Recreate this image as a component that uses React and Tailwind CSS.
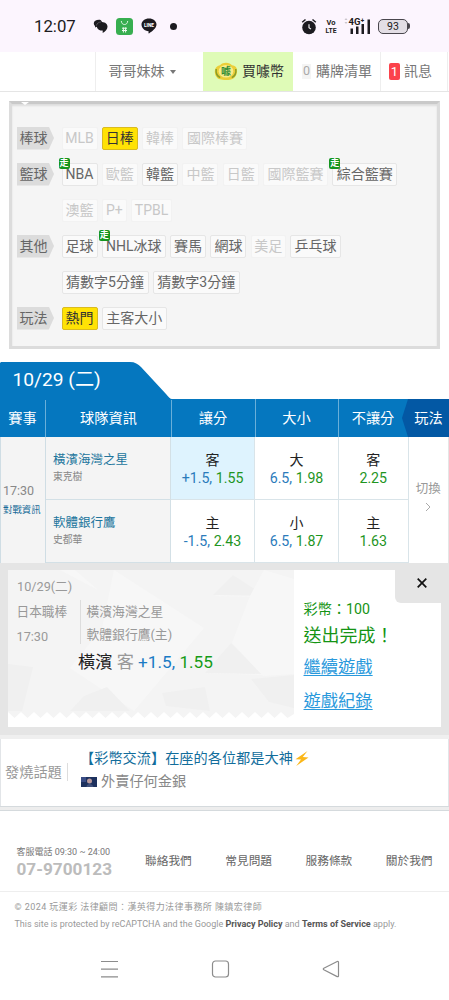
import React from "react";

const sports = [
  {
    label: "棒球",
    items: [
      { name: "MLB", off: true, w: "w-9" },
      { name: "日棒", active: true, w: "w-9" },
      { name: "韓棒", off: true, w: "w-9" },
      { name: "國際棒賽", off: true, w: "w-[65px]" },
    ],
  },
  {
    label: "籃球",
    items: [
      { name: "NBA", live: true, w: "w-9" },
      { name: "歐籃", off: true, w: "w-9" },
      { name: "韓籃", w: "w-9" },
      { name: "中籃", off: true, w: "w-9" },
      { name: "日籃", off: true, w: "w-9" },
      { name: "國際籃賽", off: true, w: "w-[65px]" },
      { name: "綜合籃賽", live: true, w: "w-[65px]" },
    ],
  },
  {
    items: [
      { name: "澳籃", off: true, w: "w-9" },
      { name: "P+", off: true, w: "w-[25px]" },
      { name: "TPBL", off: true, w: "w-[41px]" },
    ],
  },
  {
    label: "其他",
    items: [
      { name: "足球", w: "w-9" },
      { name: "NHL冰球", live: true, w: "w-[64px]" },
      { name: "賽馬", w: "w-9" },
      { name: "網球", w: "w-9" },
      { name: "美足", off: true, w: "w-[35px]" },
      { name: "乒乓球", w: "w-[51px]" },
    ],
  },
  {
    items: [
      { name: "猜數字5分鐘", w: "w-[87px]" },
      { name: "猜數字3分鐘", w: "w-[87px]" },
    ],
  },
  {
    label: "玩法",
    items: [
      { name: "熱門", active: true, w: "w-9" },
      { name: "主客大小", w: "w-[65px]" },
    ],
  },
];

const games = [
  {
    team: "橫濱海灣之星",
    pitcher: "東克樹",
    odds: [
      { side: "客", point: "+1.5,", rate: "1.55", picked: true },
      { side: "大", point: "6.5,", rate: "1.98" },
      { side: "客", rate: "2.25" },
    ],
  },
  {
    team: "軟體銀行鷹",
    pitcher: "史都華",
    odds: [
      { side: "主", point: "-1.5,", rate: "2.43" },
      { side: "小", point: "6.5,", rate: "1.87" },
      { side: "主", rate: "1.63" },
    ],
  },
];

const footerLinks = ["聯絡我們", "常見問題", "服務條款", "關於我們"];

function StatusBar() {
  return (
    <div className="flex h-[52px] items-center bg-[#fcf5fe] pl-[34px] text-[#1c1b20]">
      <span className="w-[59px] text-[16.800px] leading-none">12:07</span>
      <svg className="h-4 w-4" viewBox="0 0 16 16" fill="#1c1b20">
        <path d="M6 1.800C3 1.800.8 3.200.8 5.200c0 1.200.5 2 1.300 2.700L2 9.500l1.700-.8c.8 2.700 2.800 3.800 6 3.900v2.500c2.700-1.700 4.800-3.700 4.800-6.300 0-3-2.200-4.700-5.500-4.900C8.400 2.400 7.400 1.800 6 1.800Z" />
        <path d="M3.500 7.500c.3-2.300 2.500-3.400 4.500-3.500" fill="none" stroke="#8d8890" strokeWidth=".5" />
      </svg>
      <svg className="ml-[7px] h-[17px] w-[17px]" viewBox="0 0 17 17">
        <rect width="17" height="17" rx="3.500" fill="#37ae50" />
        <path d="M5.300 3c.2 2.400 1.500 3.500 3.200 3.500S11.500 5.400 11.700 3" fill="none" stroke="#dff5e2" strokeWidth="1" />
        <path d="M6 10.200h5M6 12.500h5M7.400 9.500v5M9.600 9.500v5" stroke="#eefbef" strokeWidth="1" />
      </svg>
      <svg className="ml-2 h-4 w-4" viewBox="0 0 16 16">
        <path d="M8 .5c4.300 0 7.500 2.700 7.500 6.100C15.500 10.300 11 13.500 8 15.500c-.5.200-.6-.6-.4-2.200C3.500 13 .5 10.200.5 6.600.5 3.200 3.700.5 8 .5Z" fill="#1c1b20" />
        <text x="8" y="8.700" textAnchor="middle" fontSize="4.800" fontWeight="800" fill="#fff">LINE</text>
      </svg>
      <span className="ml-[13px] h-[7px] w-[7px] rounded-full bg-[#1c1b20]" />
      <svg className="ml-[124px] h-[17px] w-4" viewBox="0 0 16 17" fill="none" stroke="#1c1b20">
        <circle cx="8" cy="9.500" r="6.800" fill="#1c1b20" stroke="none" />
        <path d="M1.200 4.300 4.500 1.500M14.800 4.300 11.500 1.500" strokeWidth="1.500" />
        <path d="M8 6.300v3.500l2 1.300" stroke="#fff" strokeWidth="1.100" />
      </svg>
      <svg className="ml-[8px] h-[20px] w-[12px]" viewBox="0 0 12 20" fill="#1c1b20" fontWeight="700">
        <text x="6" y="9" textAnchor="middle" fontSize="7.500">Vo</text>
        <text x="6" y="17.300" textAnchor="middle" fontSize="7" textLength="11" lengthAdjust="spacingAndGlyphs">LTE</text>
      </svg>
      <svg className="ml-[6px] h-[20px] w-[29px]" viewBox="0 0 29 20" fill="#1c1b20">
        <path d="m1.500 4 1.500-2 1.500 2ZM1.500 6 3 8l1.500-2Z" fill="#c9c4cb" />
        <text x="5.500" y="8.500" fontSize="9.500" fontWeight="700">4G⁺</text>
        <path d="M7.500 12.500H10V18H7.500ZM13 10.500h2.500V18H13ZM18.500 8H21v10h-2.500ZM24.500 3.500H27V18h-2.500Z" />
      </svg>
      <div className="ml-[6px] flex h-[15px] w-[30px] items-center justify-center rounded-[5px] border-[1.500px] border-[#49464d] bg-[#e3dee5] pt-[2px] text-[10.500px] leading-none">
        93
      </div>
      <span className="h-[6px] w-[2px] rounded-r bg-[#49464d]" />
    </div>
  );
}

function CoinIcon() {
  return (
    <svg className="h-[19px] w-[24px]" viewBox="0 0 24 19">
      <path d="M12 .8c3 0 4.500 1 6 2.500 3 .5 5 2 5 4.700.5 4-2 9-6 9.500-3 .8-8 .8-11-.2C3 17 .7 13 .8 9.500 1 5.500 3 4 6 3.200 8 1.500 9.500.8 12 .8Z" fill="#ebce38" />
      <path d="M2.200 7c-.6 4 1 7 4 8.700M21.800 7c.6 4-1 7-4 8.700" fill="none" stroke="#8a9d27" strokeWidth="1.500" />
      <ellipse cx="12" cy="9.200" rx="7.300" ry="6.300" fill="#f7ec8c" />
      <text x="12" y="13" textAnchor="middle" fontSize="10" fontWeight="700" fill="#318d35">噱</text>
    </svg>
  );
}

function TopNav() {
  return (
    <div className="flex h-10 border-b border-[#e5e5e5] bg-white text-[14px] text-[#777]">
      <div className="w-[95px]" />
      <div className="flex w-[108px] items-center border-l border-[#eee] pl-[12.500px]">
        哥哥妹妹
        <span className="ml-[5px] border-x-[3.500px] border-t-4 border-x-transparent border-t-[#777]" />
      </div>
      <div className="flex w-[90px] items-center gap-1 bg-[#dffbb7] pl-[11px] text-[#333]">
        <CoinIcon />
        買噱幣
      </div>
      <div className="flex w-[87px] items-center pl-[9px]">
        <span className="mr-[5px] flex h-[15px] w-[9px] items-center justify-center bg-[#f4f4f4] text-[12.500px] text-[#aaa]">0</span>
        購牌清單
      </div>
      <div className="flex w-[68px] items-center border-x border-[#eee] pl-2">
        <span className="mr-1 flex h-[17px] w-[11px] items-center justify-center rounded-xs bg-[#fb434c] text-[13px] text-white">1</span>
        訊息
      </div>
    </div>
  );
}

function Chip({ item }) {
  let look = "border-[#e6e6e6] bg-[#fafafa] text-[#666]";
  if (item.off) look = "border-[#f2f2f2] bg-[#fafafa] text-[#c8c8c8]";
  if (item.active) look = "border-[#dabb20] bg-[#ffe205] text-[#333]";
  return (
    <span className={`relative flex h-[23px] shrink-0 items-center justify-center rounded-xs border text-[14px] whitespace-nowrap ${item.w} ${look}`}>
      {item.name}
      {item.live && (
        <span className="absolute -top-[6px] -left-1 flex h-[11px] w-[11px] items-center justify-center rounded-[2px] bg-[#15951f] text-[9px] leading-none font-bold text-white">
          走
        </span>
      )}
    </span>
  );
}

function SportFilter() {
  return (
    <div className="relative mt-[9px] ml-[9px] flex h-[248px] w-[431px] flex-col gap-[13px] border-[3px] border-[#dcdcdc] border-t-[#c9c9c9] bg-[#f5f5f5] pt-[22.500px] pl-[5px] shadow-[inset_0_2px_2px_#ddd]">
      <span className="absolute -top-[2px] left-[9px] border-x-[4px] border-t-[3px] border-x-transparent border-t-white" />
      {sports.map((row, i) => (
        <div key={i} className="flex h-[23px]">
          <div className="w-[44.500px]">
            {row.label && (
              <div className="flex h-[23px] w-[37px] items-center bg-[#dcdcdc] pl-[2.500px] text-[14px] text-[#666] [clip-path:polygon(0_0,86%_0,100%_50%,86%_100%,0_100%)]">
                {row.label}
              </div>
            )}
          </div>
          <div className="flex gap-[4.300px]">
            {row.items.map((item) => (
              <Chip key={item.name} item={item} />
            ))}
          </div>
        </div>
      ))}
    </div>
  );
}

function OddsCell({ odd }) {
  return (
    <div
      className={`flex flex-col items-center border-r border-b border-[#d9e4e9] pt-[14px] text-[14px] leading-[18px] ${
        odd.picked ? "bg-[#def3fe]" : "bg-white"
      }`}
    >
      <span className="text-[#222]">{odd.side}</span>
      <span className="text-[14.200px]">
        {odd.point && <span className="text-[#2b7bbb]">{odd.point} </span>}
        <span className="text-[#1f951f]">{odd.rate}</span>
      </span>
    </div>
  );
}

function GameTable() {
  return (
    <div className="mt-[13px]">
      <div className="relative h-[37px]">
        <svg className="absolute inset-0 h-[38px] w-[172px]" viewBox="0 0 172 38" fill="#0577bf">
          <path d="M1 0H130c5 0 8 2 11 5l25 27c3 3.500 4 5 6 5v1H0V1Z" />
        </svg>
        <span className="relative block pt-[4px] pl-[12.500px] text-[19.200px] leading-[28px] text-white">10/29 (二)</span>
      </div>
      <div className="grid h-[38px] grid-cols-[45px_126px_84px_83px_70px_41px] bg-[#0577bf] text-center text-[14.200px] leading-[38px] text-white">
        <span>賽事</span>
        <span className="border-l border-[#6aafd9]">球隊資訊</span>
        <span className="border-l border-[#6aafd9] pr-px">讓分</span>
        <span className="border-l border-[#6aafd9] pr-px">大小</span>
        <span className="border-l border-[#6aafd9] pr-px">不讓分</span>
        <span className="-ml-[6px] bg-[#0358a4] pl-[6px] [clip-path:polygon(6px_0,100%_0,100%_100%,6px_100%,0_50%)]">玩法</span>
      </div>
      <div className="flex h-[126px]">
        <div className="w-[45.500px] border-x border-[#cfdde4] bg-[#f4f4f4] pt-[44px] pl-[2px] whitespace-nowrap">
          <div className="text-[12.500px] leading-[20px] text-[#888]">17:30</div>
          <div className="text-[9.400px] leading-[18px] text-[#176b98]">對戰資訊</div>
        </div>
        <div className="w-[363px]">
          {games.map((game) => (
            <div key={game.team} className="grid h-[63px] grid-cols-[125.500px_84px_84px_69.500px]">
              <div className="border-r border-b border-[#d3e0e6] bg-[#f4f4f4] pt-[13px] pl-[7.500px]">
                <div className="text-[12.500px] leading-[20px] text-[#21759c]">{game.team}</div>
                <div className="text-[9.800px] leading-[14px] text-[#888]">{game.pitcher}</div>
              </div>
              {game.odds.map((odd, i) => (
                <OddsCell key={i} odd={odd} />
              ))}
            </div>
          ))}
        </div>
        <div className="flex flex-1 flex-col items-center border-r border-[#e5e5e5] bg-white pt-[42px] text-[12.500px] leading-[20px] text-[#999]">
          切換
          <svg className="mt-[3px] h-[10px] w-[6px]" viewBox="0 0 6 10" fill="none" stroke="#aaa">
            <path d="m1 1 4 4-4 4" />
          </svg>
        </div>
      </div>
    </div>
  );
}

function Ticket() {
  // the torn edge along the bottom of the ticket
  let edge = "M286 0V144";
  for (let x = 286; x > 0; x -= 13) {
    edge += ` L${x - 6.5} 148 L${x - 13} 142`;
  }
  edge += " V0Z";
  return (
    <div className="relative flex h-[157px] w-[286px] flex-col overflow-hidden text-[#999]">
      <svg className="absolute inset-0 h-[157px] w-[286px]" viewBox="0 0 286 157">
        <path d={edge} fill="#f4f4f4" />
        <path d="m52 0 38 20L67 0ZM207 26 224 6l32 21ZM197 103l26-29 33 31ZM62 98 94 58 106 0l90 58-70 83Z" fill="#f7f7f7" />
        <path d="m205 25 20-20 32 21ZM197 103l26-30 31 31ZM0 94l25 3-11 44H0ZM76 126l23-9 23 24H62ZM154 123l43-6 5 24-44-5ZM243 109l43-4v33l-25-6Z" fill="#f0f0f0" />
        <path d="m256 0 30 9v95l-31 2-31-33 18-47Z" fill="#f7f7f7" />
      </svg>
      <div className="relative pt-[7px] pl-[9px] text-[12.700px] leading-[19px]">10/29(二)</div>
      <div className="relative flex">
        <div className="mt-[4px] h-[44px] w-[73px] border-r border-[#ddd] pl-[8.500px] text-[12.700px] leading-[24.500px]">
          <div>日本職棒</div>
          <div>17:30</div>
        </div>
        <div className="mt-[3.500px] pl-[5.500px] text-[12.800px] leading-[23px]">
          <div>橫濱海灣之星</div>
          <div>軟體銀行鷹(主)</div>
        </div>
      </div>
      <div className="relative pt-px pl-[70px] text-[17.200px] leading-[30px]">
        <span className="text-[#222]">橫濱</span> 客 <span className="text-[#1b7bc5]">+1.5,</span>{" "}
        <span className="text-[#169b16]">1.55</span>
      </div>
    </div>
  );
}

function BetResult() {
  return (
    <div className="relative h-[172px] bg-[#e5e5e5] pt-[7px] pl-2">
      <div className="flex h-[157px] w-[433px] bg-white">
        <Ticket />
        <div className="pt-[29px] pl-[9.500px] text-[#149414]">
          <div className="text-[14.200px] leading-[21px]">彩幣：100</div>
          <div className="pt-px text-[18px] leading-[29px]">送出完成！</div>
          <div className="text-[17.300px] leading-[34px] text-[#2999dc] underline underline-offset-2">
            <div>繼續遊戲</div>
            <div>遊戲紀錄</div>
          </div>
        </div>
      </div>
      <button className="absolute top-0 right-0 flex h-10 w-[54px] items-center justify-center rounded-bl-md bg-[#e5e5e5]">
        <svg className="h-[10px] w-[10px]" viewBox="0 0 10 10" stroke="#111" strokeWidth="1.700">
          <path d="m.7.7 8.600 8.600M9.300.7.7 9.300" />
        </svg>
      </button>
    </div>
  );
}

function HotTopic() {
  return (
    <div className="border-t-4 border-[#efefef] bg-white">
      <div className="flex h-[67px] border-x border-[#e2e5e8]">
        <div className="mt-[24px] h-[18px] w-[67px] border-r border-[#ddd] pl-1 text-[14.200px] leading-[18px] text-[#999]">發燒話題</div>
        <div className="pt-[8px] pl-[13px]">
          <div className="flex items-center text-[14.200px] leading-[22px] text-[#126d9b]">
            <span className="-ml-px">【彩幣交流】在座的各位都是大神</span>
            <svg className="ml-[2px] h-[15px] w-[14px]" viewBox="0 0 14 15">
              <path d="M12.500 0 .5 8.300l5.500.2L1.200 15 13.500 6.400 7.800 6Z" fill="#fbb719" />
            </svg>
          </div>
          <div className="flex items-center pt-px text-[14.200px] leading-[23px] text-[#888]">
            <svg className="mr-1 h-[10px] w-[16px]" viewBox="0 0 16 10">
              <path d="M0 0h16v10H0Z" fill="#1d315e" />
              <path d="M0 0h5v5H0Z" fill="#3a4d85" />
              <circle cx="8.500" cy="4" r="2.500" fill="#b99a9d" />
              <path d="M5.500 10c0-4 6-4 7 0Z" fill="#40517d" />
            </svg>
            外賣仔何金銀
          </div>
        </div>
      </div>
      <div className="h-[5px] border-y border-[#d5dadd] bg-[#ededed]" />
    </div>
  );
}

function Footer() {
  return (
    <footer className="bg-white">
      <div className="flex h-[81px] border-b border-[#eee] pt-[35px] pl-[16.500px]">
        <div className="w-[128.500px] whitespace-nowrap">
          <div className="text-[9px] leading-[13px] text-[#777]">客服電話 09:30 ~ 24:00</div>
          <div className="text-[17.200px] leading-[20px] font-bold text-[#bcbcbc]">07-9700123</div>
        </div>
        <div className="flex gap-[33.500px] pt-[5px] text-[11.700px] leading-[20px] whitespace-nowrap text-[#666]">
          {footerLinks.map((link) => (
            <a key={link}>{link}</a>
          ))}
        </div>
      </div>
      <div className="pt-[7px] pl-[14.500px] text-[9px] leading-[17px] whitespace-nowrap text-[#999]">
        <div className="tracking-[0.430px]">© 2024 玩運彩 法律顧問：漢英得力法律事務所 陳鎮宏律師</div>
        <div>
          This site is protected by reCAPTCHA and the Google <b className="text-[#555]">Privacy Policy</b> and{" "}
          <b className="text-[#555]">Terms of Service</b> apply.
        </div>
      </div>
    </footer>
  );
}

function SystemNav() {
  return (
    <div className="mt-[27px] flex items-center gap-[92px] pl-[100px]">
      <svg className="h-[18px] w-[19px]" viewBox="0 0 19 18" stroke="#8c8c8c" strokeWidth="1.200">
        <path d="M1 1.500h17M1 9.200h17M1 16.900h17" />
      </svg>
      <svg className="h-[18px] w-[19px]" viewBox="0 0 19 18" fill="none" stroke="#8c8c8c" strokeWidth="1.200">
        <rect x="1.500" y="1" width="16" height="16" rx="3" />
      </svg>
      <svg className="h-[18px] w-[18px]" viewBox="0 0 18 18" fill="none" stroke="#8c8c8c" strokeWidth="1.200" strokeLinejoin="round">
        <path d="M15.200 1.500 1.800 8.300c-.7.400-.7 1 0 1.400l13.400 6.900c.7.300 1.300 0 1.300-.7V2.200c0-.7-.6-1-1.300-.7Z" />
      </svg>
    </div>
  );
}

export default function App() {
  return (
    <div className="h-[1000px] w-[449px] overflow-hidden bg-white font-[Roboto,'Noto_Sans_CJK_TC',sans-serif]">
      <StatusBar />
      <TopNav />
      <SportFilter />
      <GameTable />
      <BetResult />
      <HotTopic />
      <Footer />
      <SystemNav />
    </div>
  );
}
